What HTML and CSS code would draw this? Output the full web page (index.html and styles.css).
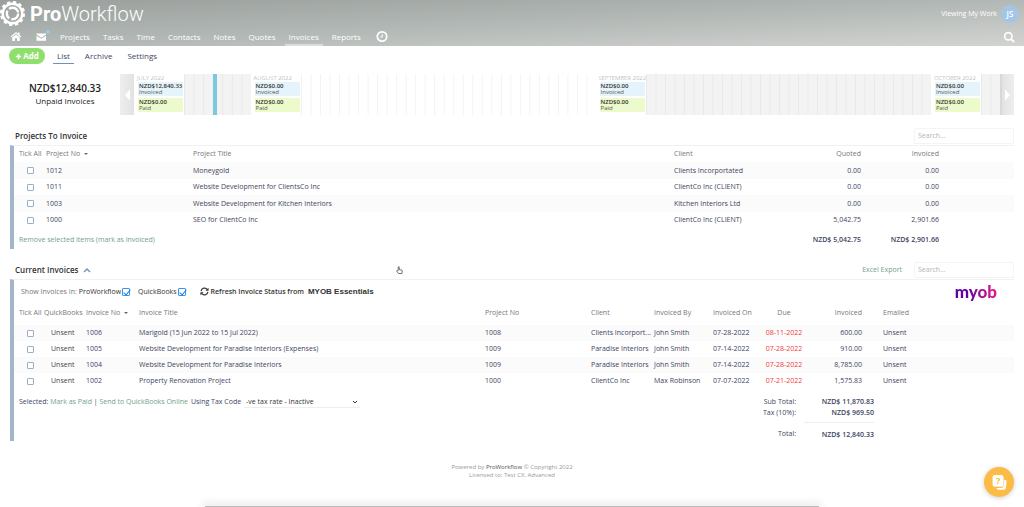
FILE: index.html
```html
<!DOCTYPE html>
<html lang="en">
<head>
<meta charset="utf-8">
<meta name="viewport" content="width=device-width, initial-scale=1">
<title>ProWorkflow - Invoices</title>
<link rel="stylesheet" href="styles.css">
</head>
<body>
<header class="topbar">
  <div class="brand-row">
    <a class="brand" href="#">
      <svg class="brand-mark" viewBox="0 0 26 26" aria-hidden="true">
        <circle cx="12.500" cy="12.500" r="9.800" fill="none" stroke="#fff" stroke-width="2.400"/>
        <circle cx="12.500" cy="12.500" r="11.500" fill="none" stroke="#fff" stroke-width="2.200" stroke-dasharray="3.400 2.620"/>
        <circle cx="12.500" cy="12.500" r="5.700" fill="none" stroke="#fff" stroke-width="2.400" stroke-dasharray="10 2 8.500 2 11.300 2"/>
      </svg>
      <span class="brand-name"><b>Pro</b>Workflow</span>
    </a>
    <div class="account"><span>Viewing My Work</span><button class="avatar" type="button">JS</button></div>
  </div>
  <nav class="nav">
    <a class="nav-icon" href="#" aria-label="Home"><svg viewBox="0 0 12 11"><path d="M6 1 .7 5.600l.7.800L6 2.500l4.600 3.900.7-.8-1.800-1.600V1.500H8.100v1.300z" fill="#fff"/><path d="M6 3.400 2.200 6.600V10h2.700V7.300h2.200V10h2.700V6.600z" fill="#fff"/></svg></a>
    <a class="nav-icon mail" href="#" aria-label="Messages"><svg viewBox="0 0 12 11"><path d="M1.500 2.500h9.500v1L6.200 6.700 1.500 3.500zM1.500 4.700l4.700 3L11 4.700v5H1.500z" fill="#fff"/></svg></a>
    <a href="#">Projects</a><a href="#">Tasks</a><a href="#">Time</a><a href="#">Contacts</a><a href="#">Notes</a><a href="#">Quotes</a><a class="active" href="#">Invoices</a><a href="#">Reports</a>
    <a class="nav-icon clock" href="#" aria-label="Timer"><svg viewBox="0 0 12 12"><circle cx="6" cy="6" r="4.700" fill="none" stroke="#fff" stroke-width="1.700"/><path d="M6.300 3.500v3H4.200" fill="none" stroke="#fff" stroke-width="1"/></svg></a>
    <button class="nav-search" type="button" aria-label="Search"><svg viewBox="0 0 12 12"><circle cx="5.300" cy="5.300" r="3.700" fill="none" stroke="#fff" stroke-width="1.600"/><path d="m8 8 3 3" stroke="#fff" stroke-width="2"/></svg></button>
  </nav>
</header>

<nav class="subnav">
  <button class="add" type="button"><svg viewBox="0 0 8 8" aria-hidden="true"><path d="M4 1v6M1 4h6" stroke="#fff" stroke-width="1.800"/></svg>Add</button>
  <a class="active" href="#">List</a><a href="#">Archive</a><a href="#">Settings</a>
</nav>

<section class="overview">
  <div class="unpaid"><strong>NZD$12,840.33</strong><span>Unpaid Invoices</span></div>
  <div class="timeline">
    <button class="step" type="button" aria-label="Previous"><svg viewBox="0 0 6 14"><path d="M6 0v14L0 7z" fill="#fff"/></svg></button>
    <div class="month"><h3>JULY 2022</h3><p class="inv"><b>NZD$12,840.33</b>Invoiced</p><p class="paid"><b>NZD$0.00</b>Paid</p></div>
    <div class="days shaded" style="--days:7"><i class="today"></i></div>
    <div class="month"><h3>AUGUST 2022</h3><p class="inv"><b>NZD$0.00</b>Invoiced</p><p class="paid"><b>NZD$0.00</b>Paid</p></div>
    <div class="days" style="--days:31"></div>
    <div class="month"><h3>SEPTEMBER 2022</h3><p class="inv"><b>NZD$0.00</b>Invoiced</p><p class="paid"><b>NZD$0.00</b>Paid</p></div>
    <div class="days shaded" style="--days:30"></div>
    <div class="month"><h3>OCTOBER 2022</h3><p class="inv"><b>NZD$0.00</b>Invoiced</p><p class="paid"><b>NZD$0.00</b>Paid</p></div>
    <div class="days shaded" style="--days:2"></div>
    <button class="step next" type="button" aria-label="Next"><svg viewBox="0 0 6 14"><path d="M0 0v14l6-7z" fill="#fff"/></svg></button>
  </div>
</section>

<main>
  <section class="block">
    <div class="block-head"><h2>Projects To Invoice</h2><input class="search" type="search" placeholder="Search..." aria-label="Search projects"></div>
    <div class="panel projects">
      <table>
        <colgroup><col class="c-tick"><col class="c-no"><col><col class="c-client"><col class="c-quoted"><col class="c-quoted"><col class="c-rest"></colgroup>
        <thead><tr><th>Tick All</th><th>Project No <span class="sort"></span></th><th>Project Title</th><th>Client</th><th class="num">Quoted</th><th class="num">Invoiced</th><th></th></tr></thead>
        <tbody>
          <tr><td><input type="checkbox" aria-label="1012"></td><td>1012</td><td>Moneygold</td><td>Clients Incorportated</td><td class="num">0.00</td><td class="num">0.00</td><td></td></tr>
          <tr><td><input type="checkbox" aria-label="1011"></td><td>1011</td><td>Website Development for ClientsCo Inc</td><td>ClientCo Inc (CLIENT)</td><td class="num">0.00</td><td class="num">0.00</td><td></td></tr>
          <tr><td><input type="checkbox" aria-label="1003"></td><td>1003</td><td>Website Development for Kitchen Interiors</td><td>Kitchen Interiors Ltd</td><td class="num">0.00</td><td class="num">0.00</td><td></td></tr>
          <tr><td><input type="checkbox" aria-label="1000"></td><td>1000</td><td>SEO for ClientCo Inc</td><td>ClientCo Inc (CLIENT)</td><td class="num">5,042.75</td><td class="num">2,901.66</td><td></td></tr>
        </tbody>
        <tfoot><tr><td colspan="4"><a class="link" href="#">Remove selected items (mark as invoiced)</a></td><td class="num">NZD$ 5,042.75</td><td class="num">NZD$ 2,901.66</td><td></td></tr></tfoot>
      </table>
    </div>
  </section>

  <section class="block">
    <div class="block-head"><h2>Current Invoices</h2>
      <svg class="chevron" viewBox="0 0 8 6" aria-hidden="true"><path d="m1 5 3-3 3 3" fill="none" stroke="#7f97b5" stroke-width="1.500"/></svg>
      <a class="link export" href="#">Excel Export</a><input class="search" type="search" placeholder="Search..." aria-label="Search invoices">
      <svg class="pointer" viewBox="0 0 8 10" aria-hidden="true"><path d="M2.500 5V1.300c0-.9 1.200-.9 1.200 0V4l2.800.6c.6.100.8.500.7 1L6.700 8.500H3L.900 6c-.4-.8.500-1.200 1-.6z" fill="#fff" stroke="#333" stroke-width=".8"/></svg>
    </div>
    <div class="panel">
      <div class="filters">
        <span class="muted">Show Invoices In:</span>
        <label>ProWorkflow<input type="checkbox" checked></label>
        <label>QuickBooks<input type="checkbox" checked></label>
        <button class="refresh" type="button"><svg viewBox="0 0 10 10" aria-hidden="true"><path d="M1.200 4.500A3.800 3.800 0 0 1 8.200 3M8.800 5.500A3.800 3.800 0 0 1 1.800 7" fill="none" stroke="#333" stroke-width="1.300"/><path d="M9.500.7v3.500H6zM.5 9.300V5.800H4z" fill="#333"/></svg>Refresh Invoice Status from <span>MYOB Essentials</span></button>
        <span class="myob">myob</span>
      </div>
      <table class="invoices">
        <colgroup><col class="i-tick"><col class="i-qb"><col class="i-no"><col><col class="i-project"><col class="i-client"><col class="i-by"><col class="i-on"><col class="i-due"><col class="i-amount"><col class="i-mail"></colgroup>
        <thead><tr><th>Tick All</th><th>QuickBooks</th><th>Invoice No <span class="sort"></span></th><th>Invoice Title</th><th>Project No</th><th>Client</th><th>Invoiced By</th><th>Invoiced On</th><th class="due">Due</th><th class="num">Invoiced</th><th class="mailed">Emailed</th></tr></thead>
        <tbody>
          <tr><td><input type="checkbox" aria-label="1006"></td><td class="qb">Unsent</td><td>1006</td><td>Marigold (15 Jun 2022 to 15 Jul 2022)</td><td>1008</td><td>Clients Incorport...</td><td>John Smith</td><td>07-28-2022</td><td class="due">08-11-2022</td><td class="num">600.00</td><td class="mailed">Unsent</td></tr>
          <tr><td><input type="checkbox" aria-label="1005"></td><td class="qb">Unsent</td><td>1005</td><td>Website Development for Paradise Interiors (Expenses)</td><td>1009</td><td>Paradise Interiors</td><td>John Smith</td><td>07-14-2022</td><td class="due">07-28-2022</td><td class="num">910.00</td><td class="mailed">Unsent</td></tr>
          <tr><td><input type="checkbox" aria-label="1004"></td><td class="qb">Unsent</td><td>1004</td><td>Website Development for Paradise Interiors</td><td>1009</td><td>Paradise Interiors</td><td>John Smith</td><td>07-14-2022</td><td class="due">07-28-2022</td><td class="num">8,785.00</td><td class="mailed">Unsent</td></tr>
          <tr><td><input type="checkbox" aria-label="1002"></td><td class="qb">Unsent</td><td>1002</td><td>Property Renovation Project</td><td>1000</td><td>ClientCo Inc</td><td>Max Robinson</td><td>07-07-2022</td><td class="due">07-21-2022</td><td class="num">1,575.83</td><td class="mailed">Unsent</td></tr>
        </tbody>
      </table>
      <div class="summary">
        <div class="actions"><span>Selected: <a class="link" href="#">Mark as Paid</a> | <a class="link" href="#">Send to QuickBooks Online</a></span>
          <label for="tax">Using Tax Code</label>
          <span class="select"><select id="tax"><option>-ve tax rate - Inactive</option></select><svg viewBox="0 0 6 4" aria-hidden="true"><path d="m1 1 2 2 2-2" fill="none" stroke="#333"/></svg></span>
        </div>
        <dl class="totals"><dt>Sub Total:</dt><dd>NZD$ 11,870.83</dd><dt>Tax (10%):</dt><dd>NZD$ 969.50</dd><dt class="grand">Total:</dt><dd class="grand">NZD$ 12,840.33</dd></dl>
      </div>
    </div>
  </section>
</main>

<footer class="footer">Powered by <a href="#">ProWorkflow</a> © Copyright 2022<br>Licensed to: Test CX. Advanced</footer>
<button class="help" type="button" aria-label="Help"><svg viewBox="0 0 16 16"><path d="M12.500 5.500h.6a1.500 1.500 0 0 1 1.500 1.700l-.5 5.800a2 2 0 0 1-2 1.800H7a2 2 0 0 1-1.900-1.700h4.600a2.300 2.300 0 0 0 2.300-2z" fill="#fff"/><rect x="1.500" y="1" width="10.300" height="11" rx="2" fill="#fff"/><text x="6.700" y="9.800" text-anchor="middle">?</text></svg></button>
<div class="edge"></div>
</body>
</html>
```
FILE: styles.css
```css
* { box-sizing: border-box; }
body { margin: 0; min-height: 100vh; position: relative; overflow-x: hidden; background: #fff; color: #41455f; font: 7px/10px "Open Sans", "Noto Sans", sans-serif; }
a { color: inherit; text-decoration: none; }
button { border: 0; padding: 0; background: none; color: inherit; font: inherit; cursor: pointer; }
h2, h3, p, dl, dd { margin: 0; }
svg { display: block; }

.topbar { height: 46px; background: linear-gradient(to bottom right, #9a9f9c, #b2b8b5 50%, #d3d4d2); color: #fff; }
.brand-row { display: flex; justify-content: space-between; height: 27px; }
.brand { display: flex; align-items: center; gap: 4px; }
.brand-mark { width: 26px; height: 26px; }
.brand-name { font: 300 20px/24px Roboto, "Liberation Sans", sans-serif; }
.brand-name b { font-weight: 700; }
.account { display: flex; align-items: center; gap: 4px; padding-right: 5px; }
.avatar { width: 18px; height: 18px; border-radius: 50%; background: #a3c6e6; color: #fff; font-size: 8px; font-weight: 600; }
.nav { display: flex; align-items: center; gap: 13px; height: 19px; padding: 0 9px 0 10px; font-size: 8px; }
.nav a { line-height: 19px; }
.nav .active { margin: 0 -4px; padding: 0 4px; box-shadow: inset 0 -2px #dadddb; }
.nav-icon svg { width: 12px; height: 19px; }
.mail { position: relative; }
.mail::after { content: ""; position: absolute; left: 11px; top: 3px; width: 4px; height: 4px; border-radius: 50%; background: #8fcdf2; }
.clock { margin-left: 2px; }
.nav-search { margin-left: auto; }
.nav-search svg { width: 12px; height: 12px; }

.subnav { display: flex; align-items: center; gap: 15px; height: 20px; padding-left: 9px; font-size: 8px; }
.subnav a { line-height: 16px; }
.add { display: flex; align-items: center; justify-content: center; gap: 1px; width: 36px; height: 16px; margin-right: -7px; border-radius: 8px; background: #8fdf6d; color: #fff; font-weight: 700; }
.add svg { width: 7px; height: 7px; }
.subnav .active { margin-right: -4px; padding: 0 4px; border-bottom: 1px solid #6f93b8; line-height: 14px; }

.overview { display: flex; align-items: center; padding: 8px 10px 0; }
.unpaid { display: flex; flex-direction: column; width: 110px; text-align: center; color: #222; font-size: 8px; line-height: 12px; }
.unpaid strong { font-size: 10px; font-weight: 600; line-height: 13px; }
.timeline { flex: 1; display: flex; height: 41px; }
.step { display: flex; align-items: center; justify-content: center; width: 14px; background: linear-gradient(to right, #eee, #e2e2e2); }
.step svg { width: 5px; height: 14px; }
.next { border-left: 2px solid #d5d9d9; background: linear-gradient(to right, #e2e2e2, #eee); }
.month { width: 50px; padding-left: 4px; white-space: nowrap; line-height: 6px; color: #555; }
.month h3 { margin-left: -1px; font-size: 6px; font-weight: 300; line-height: 8px; color: #999; }
.month p { width: 45px; height: 14px; margin-bottom: 2px; padding: 1px; font-size: 6px; line-height: 5px; }
.month b { display: block; font-size: 6px; font-weight: 600; color: #333; line-height: 7px; }
.inv { background: #e5f3fa; }
.paid { background: #edfbcc; }
.days { flex: var(--days) 1 0; position: relative; background: linear-gradient(to right, #f3f3f3 1px, transparent 1px) 0 0 / calc(100% / var(--days)) 100%; }
.shaded { background-color: #f3f3f3; background-image: linear-gradient(to right, #e9e9e9 1px, transparent 1px); }
.today { position: absolute; left: 43%; top: 0; bottom: 0; width: 4px; background: #7cc9df; }

main { padding: 0 10px; }
.block { padding-top: 11px; }
.block-head { display: flex; align-items: center; position: relative; height: 19px; padding-left: 5px; }
.block h2 { font-size: 8px; font-weight: 600; color: #333; }
.search { width: 100px; height: 16px; margin-left: auto; padding: 0 3px; border: 1px solid #f4f4f4; border-radius: 2px; outline: 0; background: #fff; color: #555; font: inherit; appearance: none; }
.search::placeholder { color: #b5b5b5; opacity: 1; }
.panel { border-left: 4px solid #a3b5c9; border-top: 1px solid #f1f1f1; }
table { width: 100%; border-collapse: collapse; table-layout: fixed; }
th, td { height: 16px; padding: 0; text-align: left; white-space: nowrap; font-weight: 400; }
th { color: #777; }
th:first-child, tfoot td:first-child { padding-left: 5px; }
tbody td:first-child { padding-left: 13px; }
tbody tr:nth-child(odd) { background: #fbfbfb; }
.num { text-align: right; }
.projects tbody tr:nth-child(odd) td { height: 17px; }
.projects tfoot td { height: 21px; padding-top: 3px; }
.projects tfoot .num, .totals dd { font-weight: 600; }
.c-tick { width: 32px; }
.c-no { width: 147px; }
.c-client { width: 109px; }
.c-quoted { width: 78px; }
.c-rest { width: 75px; }
.sort { display: inline-block; margin-left: 2px; border: 2px solid transparent; border-top-color: #666; border-bottom: 0; vertical-align: 1px; }
input[type="checkbox"] { appearance: none; display: block; position: relative; width: 7px; height: 7px; margin: 0; border: 1px solid #9bb0c6; border-radius: 1px; background: #fff; }
input:checked[type="checkbox"] { width: 8px; height: 8px; border-color: #3b96e8; }
input:checked::after { content: ""; position: absolute; left: 2px; top: -1px; width: 3px; height: 6px; border: solid #1c7fe0; border-width: 0 1px 1px 0; transform: rotate(40deg); }
.link { color: #6fa28b; }
.export { margin-left: auto; }
.export + .search { margin-left: 12px; }
.chevron { width: 8px; height: 6px; margin-left: 5px; }
.pointer { position: absolute; left: 386px; top: 6px; width: 7px; height: 9px; }

.filters { display: flex; align-items: center; height: 23px; padding: 0 17px 0 7px; color: #333; }
.muted { margin-right: 4px; color: #777; }
.filters label { display: flex; align-items: center; gap: 1px; margin-right: 8px; }
.muted + label { margin-left: -2px; }
.refresh { display: flex; align-items: center; gap: 2px; margin-left: 6px; font-weight: 600; }
.refresh svg { width: 9px; height: 9px; }
.refresh span { margin-left: 2px; font-family: "Liberation Sans", sans-serif; font-size: 8px; font-weight: 700; }
.myob { margin-left: auto; background: linear-gradient(to right, #6100a5 30%, #9b1196 60%, #ed1581); background-clip: text; color: transparent; font: 900 17px/22px Lato, sans-serif; }
.invoices th { height: 22px; padding-bottom: 3px; }
.i-tick { width: 30px; }
.i-qb { width: 42px; }
.i-no { width: 53px; }
.i-project { width: 106px; }
.i-client { width: 63px; }
.i-by { width: 59px; }
.i-on { width: 52px; }
.i-due { width: 38px; }
.i-amount { width: 59px; }
.i-mail { width: 152px; }
.qb { padding-left: 7px; color: #444; }
.due { text-align: center; }
td.due { color: #f2393c; }
.mailed { padding-left: 21px; }
.summary { display: flex; justify-content: space-between; align-items: flex-start; padding: 7px 140px 0 5px; }
.actions { display: flex; align-items: center; gap: 3px; }
.select { position: relative; width: 116px; padding-top: 1px; border-bottom: 1px solid #eee; }
.select select { display: block; width: 100%; padding: 0 2px; border: 0; background: transparent; color: #333; font: inherit; appearance: none; }
.select svg { position: absolute; right: 2px; top: 4px; width: 6px; height: 4px; }
.totals { display: grid; grid-template-columns: auto 70px; column-gap: 8px; line-height: 11px; text-align: right; }
.totals .grand { margin-top: 4px; padding: 6px 0 1px; }
.totals dd.grand { border-top: 1px solid #eee; }

.footer { padding-top: 22px; text-align: center; color: #999; font-size: 6px; line-height: 8px; }
.footer a { color: #555; }
.help { position: fixed; right: 10px; bottom: 10px; width: 30px; height: 30px; border-radius: 50%; background: #fcbb45; box-shadow: 0 1px 5px #0003; }
.help svg { width: 17px; height: 17px; margin: auto; }
.help text { fill: #fcbb45; font: 700 9px "Open Sans", sans-serif; }
.edge { position: fixed; left: 20%; right: 20%; bottom: 0; height: 1px; background: #bbb; box-shadow: 0 0 10px 2px #0002; }
```
